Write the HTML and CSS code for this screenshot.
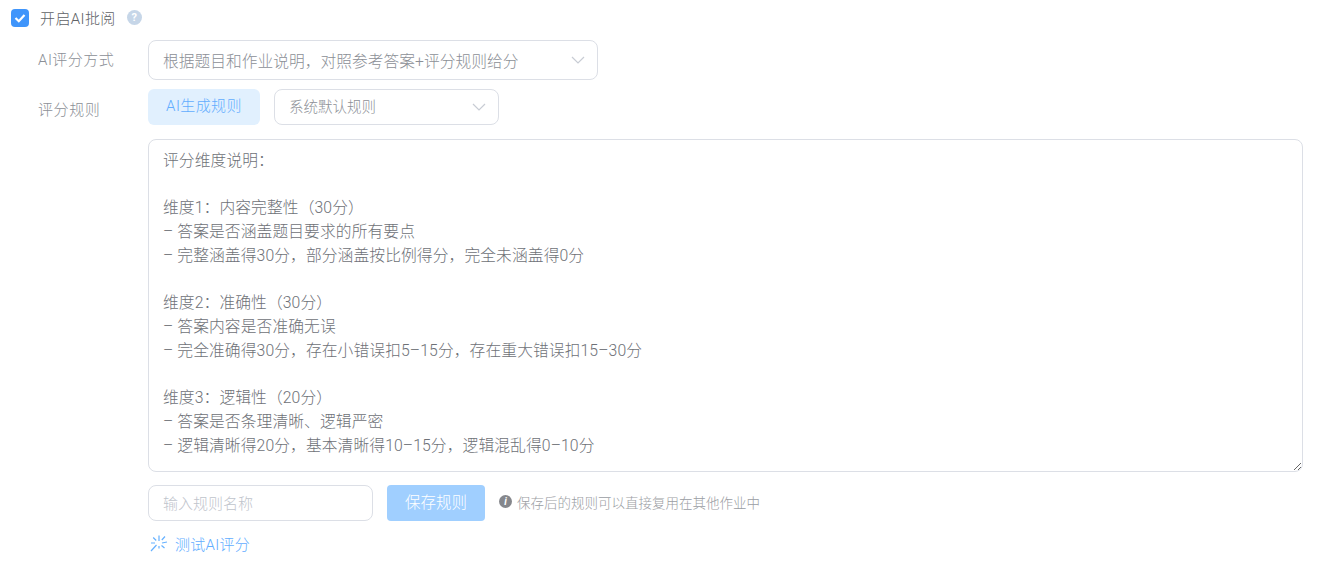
FILE: index.html
```html
<!DOCTYPE html>
<html lang="en">
<head>
    <meta charset="UTF-8">
    <title>AI批阅设置</title>
    <link rel="stylesheet" href="styles.css">
</head>
<body>
    <div class="switch-row">
        <span class="checkbox">
            <svg width="12" height="12" viewBox="0 0 12 12"><path d="M1.5 6 L4.8 9.2 L10.5 3" fill="none" stroke="#fff" stroke-width="2.2"/></svg>
        </span>
        <span class="switch-label">开启AI批阅</span>
        <span class="help">?</span>
    </div>

    <div class="form-row mode-row">
        <div class="form-label">AI评分方式</div>
        <div class="select select-wide">
            <span>根据题目和作业说明，对照参考答案+评分规则给分</span>
            <svg class="chevron" width="14" height="8" viewBox="0 0 14 8"><path d="M1 1 L7 7 L13 1" fill="none" stroke="#c8ccd4" stroke-width="1.2"/></svg>
        </div>
    </div>

    <div class="form-row rule-row">
        <div class="form-label">评分规则</div>
        <div class="form-body">
            <div class="rule-tools">
                <button class="btn-light">AI生成规则</button>
                <div class="select select-small">
                    <span>系统默认规则</span>
                    <svg class="chevron" width="14" height="8" viewBox="0 0 14 8"><path d="M1 1 L7 7 L13 1" fill="none" stroke="#c8ccd4" stroke-width="1.2"/></svg>
                </div>
            </div>
            <textarea class="rule-text">评分维度说明：

维度1：内容完整性（30分）
– 答案是否涵盖题目要求的所有要点
– 完整涵盖得30分，部分涵盖按比例得分，完全未涵盖得0分

维度2：准确性（30分）
– 答案内容是否准确无误
– 完全准确得30分，存在小错误扣5–15分，存在重大错误扣15–30分

维度3：逻辑性（20分）
– 答案是否条理清晰、逻辑严密
– 逻辑清晰得20分，基本清晰得10–15分，逻辑混乱得0–10分</textarea>
            <div class="save-row">
                <input class="rule-name" type="text" placeholder="输入规则名称">
                <button class="btn-save">保存规则</button>
                <span class="hint">
                    <span class="hint-icon">i</span>
                    保存后的规则可以直接复用在其他作业中
                </span>
            </div>
            <div class="test-link">
                <svg width="18" height="18" viewBox="0 0 18 18" fill="none" stroke="#66b1ff" stroke-width="1.2">
                    <path d="M9 0.5 V6 M9 11 V13.5 M1 8 H5 M17 7 L12 8 M3.2 2.5 L6.2 5.5 M15 1.5 L11.8 5 M6.5 10 L1 16 M11.5 10.5 L14.5 13"/>
                </svg>
                <span>测试AI评分</span>
            </div>
        </div>
    </div>
</body>
</html>
```

FILE: styles.css
```css
:root {
    --link-color: #62adff;
    --border-color: #dcdfe6;
    --text-color: #606266;
    --label-color: #8c8f96;
}
* {
    box-sizing: border-box;
}
body {
    margin: 0;
    padding: 8px 21px 0 11px;
    font-family: Roboto, "Noto Sans CJK SC", sans-serif;
    font-weight: 300;
    color: var(--text-color);
    background-color: #fff;
}
.switch-row {
    display: flex;
    align-items: center;
    height: 20px;
}
.checkbox {
    width: 18px;
    height: 18px;
    border-radius: 4px;
    background-color: #3f95fb;
    display: flex;
    align-items: center;
    justify-content: center;
}
.switch-label {
    margin-left: 11px;
    margin-bottom: 2px;
    font-size: 15px;
    letter-spacing: 0.4px;
}
.help {
    width: 15px;
    height: 15px;
    margin-left: 11px;
    margin-bottom: 2px;
    border-radius: 50%;
    background-color: #c6d6e8;
    color: #fff;
    font-size: 11px;
    font-weight: 700;
    line-height: 15px;
    text-align: center;
}
.form-row {
    display: flex;
}
.mode-row {
    margin-top: 12px;
}
.rule-row {
    margin-top: 9px;
}
.form-label {
    width: 137px;
    padding-left: 27px;
    font-size: 15px;
    letter-spacing: 0.5px;
    color: var(--label-color);
}
.mode-row .form-label {
    line-height: 40px;
}
.rule-row .form-label {
    line-height: 42px;
    letter-spacing: 0.6px;
}
.form-body {
    flex: 1;
}
.select {
    display: flex;
    align-items: center;
    justify-content: space-between;
    border: 1px solid var(--border-color);
    border-radius: 8px;
    color: var(--label-color);
}
.select-wide {
    width: 450px;
    height: 40px;
    padding: 0 12px 0 14px;
    font-size: 15.75px;
}
.select-small {
    width: 225px;
    height: 36px;
    padding: 0 12px 0 14px;
    font-size: 14.5px;
}
.select-small span {
    margin-bottom: 3px;
}
.rule-tools {
    display: flex;
    gap: 14px;
}
.btn-light {
    width: 112px;
    height: 36px;
    padding: 0 0 5px;
    border: none;
    border-radius: 6px;
    background-color: #e1f0fe;
    color: var(--link-color);
    font: inherit;
    font-size: 15px;
    letter-spacing: 0.4px;
}
.rule-text {
    display: block;
    width: 100%;
    height: 333px;
    margin-top: 14px;
    padding: 8.5px 14px;
    border: 1px solid var(--border-color);
    border-radius: 8px;
    outline: none;
    font: inherit;
    font-size: 15.75px;
    letter-spacing: 0.1px;
    line-height: 23.75px;
    color: #6e7177;
    overflow: hidden;
}
.save-row {
    display: flex;
    align-items: center;
    margin-top: 13px;
}
.rule-name {
    width: 225px;
    height: 36px;
    padding: 1px 14px 0;
    border: 1px solid var(--border-color);
    border-radius: 8px;
    outline: none;
    font: inherit;
    font-size: 15px;
}
.rule-name::placeholder {
    color: #c0c4cc;
}
.btn-save {
    width: 98px;
    height: 36px;
    margin-left: 14px;
    padding: 0 0 4px;
    border: none;
    border-radius: 4px;
    background-color: #a0cfff;
    color: #fff;
    font: inherit;
    font-size: 15.5px;
}
.hint {
    display: flex;
    align-items: center;
    gap: 5px;
    margin-left: 14px;
    margin-bottom: 3px;
    font-size: 13.5px;
    color: #9a9da3;
}
.hint-icon {
    width: 13px;
    height: 13px;
    border-radius: 50%;
    background-color: #85878c;
    color: #fff;
    font-size: 10px;
    font-weight: 700;
    font-style: italic;
    line-height: 13px;
    text-align: center;
}
.test-link {
    display: flex;
    align-items: center;
    gap: 7px;
    margin-top: 12px;
    margin-left: 2px;
    font-size: 15px;
    letter-spacing: 0.3px;
    color: var(--link-color);
}
```
